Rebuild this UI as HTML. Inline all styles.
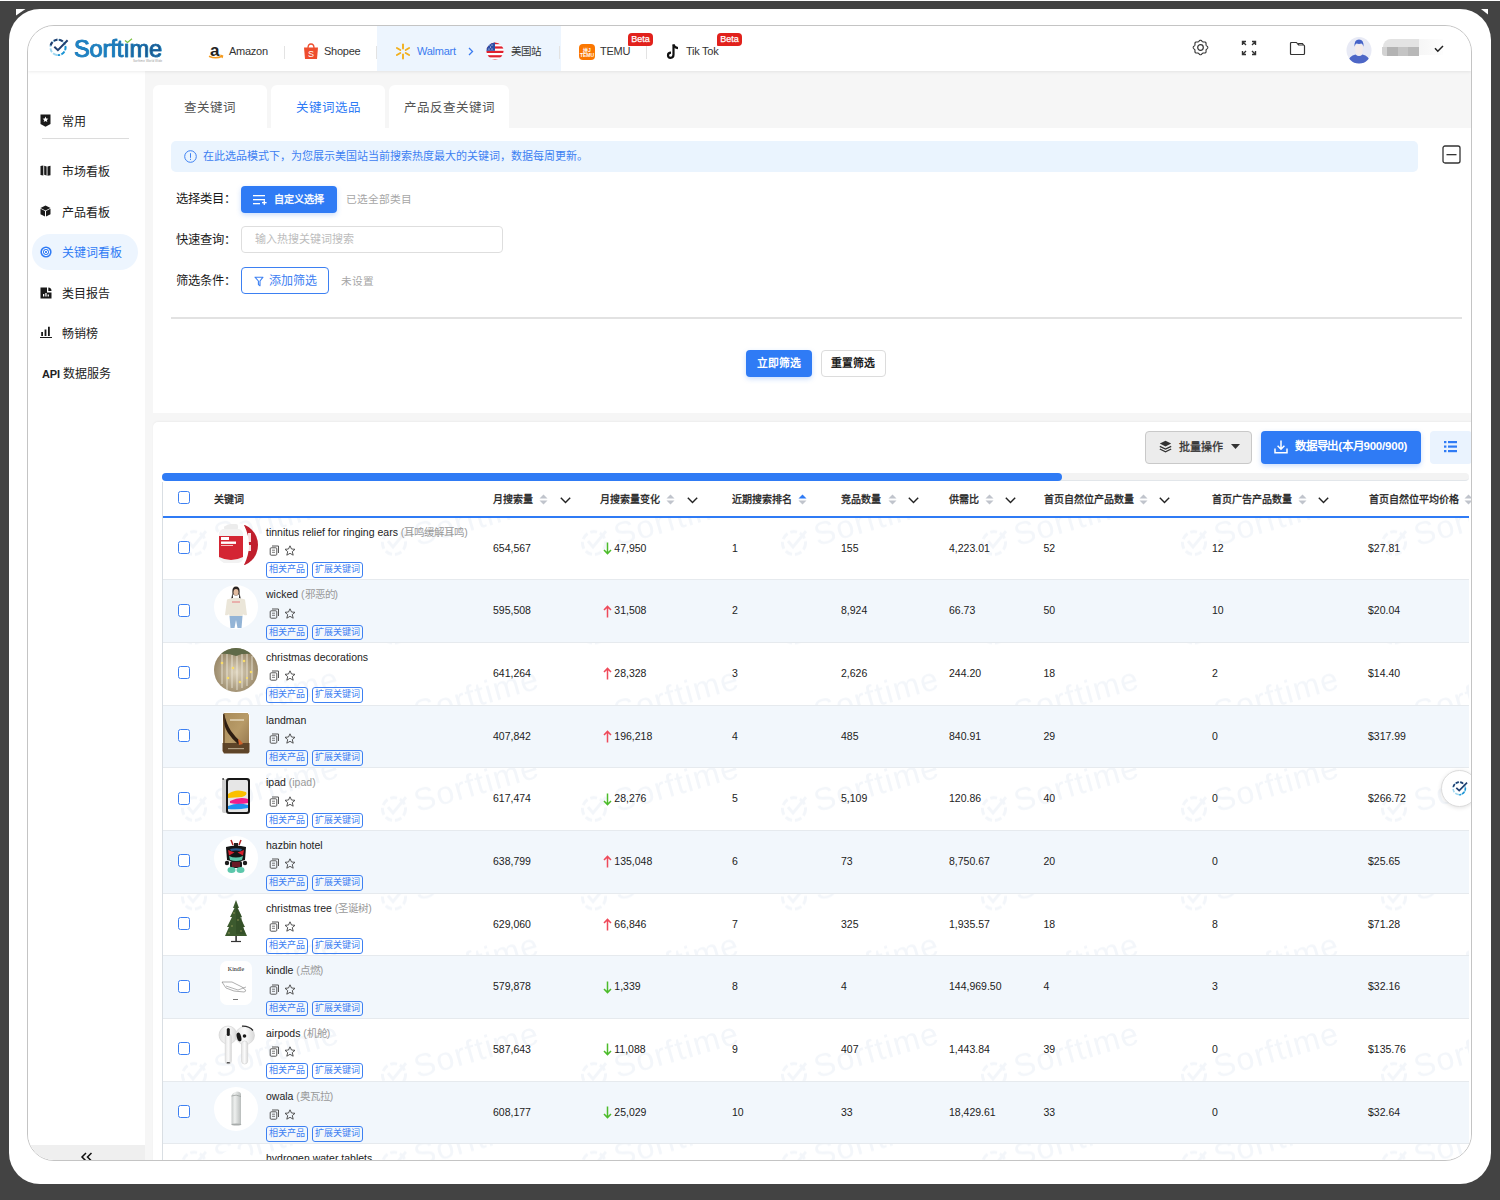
<!DOCTYPE html>
<html lang="zh-CN"><head><meta charset="utf-8">
<style>
*{box-sizing:border-box;margin:0;padding:0}
html,body{width:1500px;height:1200px;overflow:hidden;background:#434343;font-family:"Liberation Sans",sans-serif;color:#333}
.abs{position:absolute}
#outer{position:absolute;left:9px;top:9px;width:1482px;height:1175px;background:#fff;border-radius:31px}
#app{position:absolute;left:27px;top:25px;width:1445px;height:1136px;border:1px solid #c4c4c4;border-radius:27px;overflow:hidden;background:#f6f6f6}
#hdr{position:absolute;left:0;top:0;width:100%;height:45px;background:#fff;box-shadow:0 1px 3px rgba(0,0,0,.08);z-index:3}
#side{position:absolute;left:0;top:45px;width:117px;height:1091px;background:#fff}
.nav{position:absolute;left:34px;font-size:12px;font-weight:500;color:#222;height:20px;line-height:20px;white-space:nowrap}
.logo{background:linear-gradient(90deg,#1d88c9 0%,#1b7fbe 45%,#1a5f94 70%,#1c4b7a 100%);-webkit-background-clip:text;background-clip:text;color:transparent}
.ht{top:18px;font-size:11px;line-height:14px;color:#333;white-space:nowrap;letter-spacing:-0.25px}
.sep{top:20px;width:1px;height:13px;background:#e3e3e3}
.beta{top:7px;width:25px;height:13px;background:#e1211c;color:#fff;font-size:9px;line-height:13px;text-align:center;border-radius:4px 4px 4px 1px;-webkit-text-stroke:0.25px #fff}
.tab{position:absolute;top:59px;height:43px;background:#fff;border-radius:6px 6px 0 0;font-size:12.5px;line-height:46px;text-align:center}
.lbl{position:absolute;left:23px;font-size:12.3px;line-height:14px;color:#1a1a1a;font-weight:500;margin-top:-6px;white-space:nowrap}
.btnp{background:#2f7bf5;color:#fff;border-radius:4px;box-shadow:0 2px 5px rgba(47,123,245,.25)}
.grey{font-size:10.7px;line-height:14px;color:#a6a6a6;white-space:nowrap}
.cb{width:12px;height:13px;border:1.5px solid #3d80f2;border-radius:2.5px;background:#fff}
.th{position:absolute;font-size:10px;line-height:13px;font-weight:500;-webkit-text-stroke:0.3px #222;color:#222;white-space:nowrap}
.tt{position:absolute;font-size:10.5px;line-height:13px;color:#222;white-space:nowrap}
.tag{position:absolute;height:15.5px;border:1px solid #3d80f2;border-radius:3px;font-size:9px;line-height:13.5px;text-align:center;color:#3d80f2;white-space:nowrap}
.td{position:absolute;font-size:10.5px;line-height:13px;color:#222;white-space:nowrap}
</style></head>
<body>
<div class="abs" style="left:0;top:0;width:1500px;height:1px;background:#fff"></div>
<svg class="abs" style="left:0;top:0" width="1500" height="20" viewBox="0 0 1500 20"><path d="M16 9 H25.5 L16 15.5 Z" fill="#fff"/><path d="M1481 9 H1488 V14.5 Z" fill="#fff"/></svg>
<div id="outer"></div>
<div id="app">
  <div id="hdr">
    <svg class="abs" style="left:21px;top:11px" width="21" height="21" viewBox="0 0 21 21">
      <circle cx="9" cy="10.5" r="7.6" fill="none" stroke="#9fd6ef" stroke-width="1.9" stroke-dasharray="4 1.6" transform="rotate(100 9 10.5)"/>
      <path d="M16.4 9 A7.6 7.6 0 0 1 9 18.1" fill="none" stroke="#1a93d4" stroke-width="1.9" stroke-dasharray="4 1.6"/>
      <path d="M1.6 8.5 A7.6 7.6 0 0 1 14.5 5" fill="none" stroke="#1f3f70" stroke-width="2.1" stroke-dasharray="4 1.6"/>
      <path d="M5.3 9.7 L8.9 13.2 L18.6 3.3" fill="none" stroke="#1f3f70" stroke-width="2"/>
    </svg>
    <div class="abs logo" style="left:46px;top:10px;font-size:23.5px;-webkit-text-stroke:0.7px #1b78b8;letter-spacing:-0.1px">Sorftıme</div>
    <svg class="abs" style="left:96px;top:12px" width="9" height="6" viewBox="0 0 9 6"><path d="M1 2.5 L3.5 4.5 L8 0.8" fill="none" stroke="#7cc242" stroke-width="1.3"/></svg>
    <div class="abs" style="left:122px;top:29px;width:6px;height:2px"></div>
    <div class="abs" style="left:105px;top:33px;font-size:3px;color:#999;letter-spacing:0.1px">Sorftime World Wide</div>

    <!-- amazon -->
    <svg class="abs" style="left:180px;top:17px" width="16" height="17" viewBox="0 0 16 17">
      <text x="2" y="12.5" font-family="Liberation Sans" font-weight="bold" font-size="17" fill="#222">a</text>
      <path d="M1 13.2 Q8 16.5 14.2 13" fill="none" stroke="#f59a1e" stroke-width="1.6"/>
      <path d="M12.3 12 L14.6 12.8 L14 15" fill="none" stroke="#f59a1e" stroke-width="1.3"/>
    </svg>
    <div class="abs ht" style="left:201px">Amazon</div>
    <div class="abs sep" style="left:256px"></div>
    <!-- shopee -->
    <svg class="abs" style="left:275px;top:17px" width="16" height="17" viewBox="0 0 16 17">
      <path d="M5 5 Q5 1 8 1 Q11 1 11 5" fill="none" stroke="#ee4d2d" stroke-width="1.3"/>
      <path d="M1 4.5 L15 4.5 L14 16 L2 16 Z" fill="#ee4d2d"/>
      <text x="5" y="14" font-family="Liberation Sans" font-size="9" fill="#fff">S</text>
    </svg>
    <div class="abs ht" style="left:296px">Shopee</div>
    <div class="abs sep" style="left:348px"></div>
    <!-- walmart active -->
    <div class="abs" style="left:349px;top:0;width:184px;height:45px;background:#edf5fe"></div>
    <svg class="abs" style="left:367px;top:17px" width="16" height="17" viewBox="0 0 16 17">
      <g stroke="#f2b01e" stroke-width="1.9" stroke-linecap="round">
        <line x1="8" y1="1.5" x2="8" y2="5.5"/><line x1="8" y1="11.5" x2="8" y2="15.5"/>
        <line x1="1.9" y1="5" x2="5.3" y2="7"/><line x1="10.7" y1="10" x2="14.1" y2="12"/>
        <line x1="1.9" y1="12" x2="5.3" y2="10"/><line x1="10.7" y1="7" x2="14.1" y2="5"/>
      </g>
    </svg>
    <div class="abs ht" style="left:389px;color:#3b7cf0">Walmart</div>
    <svg class="abs" style="left:439px;top:19px" width="8" height="12" viewBox="0 0 8 12"><path d="M2 3 L5.5 6.5 L2 10" fill="none" stroke="#3b7cf0" stroke-width="1.3"/></svg>
    <svg class="abs" style="left:458px;top:16px" width="18" height="18" viewBox="0 0 18 18">
      <defs><clipPath id="fc"><circle cx="9" cy="9" r="8.6"/></clipPath></defs>
      <g clip-path="url(#fc)">
        <rect width="18" height="18" fill="#fff"/>
        <rect y="0" width="18" height="2.2" fill="#e0202e"/>
        <rect y="4.4" width="18" height="2.2" fill="#e0202e"/>
        <rect y="8.8" width="18" height="2.2" fill="#e0202e"/>
        <rect y="13.2" width="18" height="2.2" fill="#e0202e"/>
        <rect y="17" width="18" height="2" fill="#e0202e"/>
        <rect x="0" y="0" width="9" height="8.8" fill="#2c4ea8"/>
        <g fill="#fff"><circle cx="3" cy="3" r=".6"/><circle cx="6" cy="3" r=".6"/><circle cx="4.5" cy="5" r=".6"/><circle cx="3" cy="7" r=".6"/><circle cx="6" cy="7" r=".6"/></g>
      </g>
    </svg>
    <div class="abs ht" style="left:483px;font-size:10.5px">美国站</div>
    <div class="abs sep" style="left:531px"></div>
    <!-- temu -->
    <div class="abs" style="left:551px;top:18px;width:16px;height:16px;background:#fb7701;border-radius:4px;color:#fff;font-size:5px;line-height:5px;text-align:center;padding-top:4px;font-weight:bold">拼J<br>TEMU</div>
    <div class="abs ht" style="left:572px">TEMU</div>
    <div class="abs beta" style="left:600px">Beta</div>
    <div class="abs sep" style="left:618px"></div>
    <!-- tiktok -->
    <svg class="abs" style="left:638px;top:17px" width="14" height="17" viewBox="0 0 14 17">
      <path d="M7.5 1.5 L7.5 11.5 Q7.5 14.8 4.6 14.8 Q2 14.8 2 12.2 Q2 9.6 5 9.6" fill="none" stroke="#111" stroke-width="2.2"/>
      <path d="M7.5 1.5 Q8.5 5 12 5.2" fill="none" stroke="#111" stroke-width="2.2"/>
    </svg>
    <div class="abs ht" style="left:658px">Tik Tok</div>
    <div class="abs beta" style="left:689px">Beta</div>

    <!-- right icons -->
    <svg class="abs" style="left:1164px;top:12.5px" width="17" height="17" viewBox="0 0 17 17">
      <path d="M15.80 8.50 L15.74 8.88 L15.56 9.24 L15.30 9.58 L14.99 9.88 L14.68 10.16 L14.41 10.42 L14.21 10.69 L14.08 10.99 L14.04 11.32 L14.04 11.70 L14.07 12.11 L14.07 12.55 L14.02 12.97 L13.89 13.35 L13.66 13.66 L13.35 13.89 L12.97 14.02 L12.55 14.07 L12.11 14.07 L11.70 14.04 L11.32 14.04 L10.99 14.08 L10.69 14.21 L10.42 14.41 L10.16 14.68 L9.88 14.99 L9.58 15.30 L9.24 15.56 L8.88 15.74 L8.50 15.80 L8.12 15.74 L7.76 15.56 L7.42 15.30 L7.12 14.99 L6.84 14.68 L6.58 14.41 L6.31 14.21 L6.01 14.08 L5.68 14.04 L5.30 14.04 L4.89 14.07 L4.45 14.07 L4.03 14.02 L3.65 13.89 L3.34 13.66 L3.11 13.35 L2.98 12.97 L2.93 12.55 L2.93 12.11 L2.96 11.70 L2.96 11.32 L2.92 10.99 L2.79 10.69 L2.59 10.42 L2.32 10.16 L2.01 9.88 L1.70 9.58 L1.44 9.24 L1.26 8.88 L1.20 8.50 L1.26 8.12 L1.44 7.76 L1.70 7.42 L2.01 7.12 L2.32 6.84 L2.59 6.58 L2.79 6.31 L2.92 6.01 L2.96 5.68 L2.96 5.30 L2.93 4.89 L2.93 4.45 L2.98 4.03 L3.11 3.65 L3.34 3.34 L3.65 3.11 L4.03 2.98 L4.45 2.93 L4.89 2.93 L5.30 2.96 L5.68 2.96 L6.01 2.92 L6.31 2.79 L6.58 2.59 L6.84 2.32 L7.12 2.01 L7.42 1.70 L7.76 1.44 L8.12 1.26 L8.50 1.20 L8.88 1.26 L9.24 1.44 L9.58 1.70 L9.88 2.01 L10.16 2.32 L10.42 2.59 L10.69 2.79 L10.99 2.92 L11.32 2.96 L11.70 2.96 L12.11 2.93 L12.55 2.93 L12.97 2.98 L13.35 3.11 L13.66 3.34 L13.89 3.65 L14.02 4.03 L14.07 4.45 L14.07 4.89 L14.04 5.30 L14.04 5.68 L14.08 6.01 L14.21 6.31 L14.41 6.58 L14.68 6.84 L14.99 7.12 L15.30 7.42 L15.56 7.76 L15.74 8.12 Z" fill="none" stroke="#333" stroke-width="1.1" stroke-linejoin="round"/>
      <circle cx="8.5" cy="8.5" r="2.8" fill="none" stroke="#333" stroke-width="1.2"/>
    </svg>
    <svg class="abs" style="left:1212.5px;top:13.5px" width="16" height="16" viewBox="0 0 16 16">
      <g fill="none" stroke="#333" stroke-width="1.4">
        <path d="M1.5 5 V1.5 H5 M1.5 1.5 L5 5"/><path d="M14.5 5 V1.5 H11 M14.5 1.5 L11 5"/>
        <path d="M1.5 11 V14.5 H5 M1.5 14.5 L5 11"/><path d="M14.5 11 V14.5 H11 M14.5 14.5 L11 11"/>
      </g>
    </svg>
    <svg class="abs" style="left:1260.5px;top:14.5px" width="17" height="15" viewBox="0 0 17 15">
      <path d="M2.5 1.5 H7.5 L9.5 4 H14.5 Q15.5 4 15.5 5 V12.5 Q15.5 13.5 14.5 13.5 H2.5 Q1.5 13.5 1.5 12.5 V2.5 Q1.5 1.5 2.5 1.5 Z M9.5 4 V2.5 H13.5 L14.5 4" fill="none" stroke="#333" stroke-width="1.2" stroke-linejoin="round"/>
    </svg>
    <svg class="abs" style="left:1318px;top:10.5px" width="26" height="27" viewBox="0 0 26 27">
      <defs><clipPath id="av"><ellipse cx="13" cy="13.3" rx="12.5" ry="13.2"/></clipPath></defs>
      <ellipse cx="13" cy="13.3" rx="12.5" ry="13.2" fill="#e8eaf5"/>
      <g clip-path="url(#av)">
        <path d="M1.5 26 Q3 18.5 9.5 17.5 Q13 20.5 16.5 17.5 Q23 18.5 24.5 26 L24.5 28 L1.5 28 Z" fill="#4d66c6"/>
        <path d="M9.2 8 Q9 14.5 10 16.5 Q11.5 18.6 13 18.6 Q14.5 18.6 16 16.5 Q17 14.5 16.8 8 Z" fill="#f5ecea"/>
        <path d="M8.6 9.8 Q8 2.6 13 2.6 Q18 2.6 17.4 9.8 Q16.8 7 15.5 6.6 Q13 7.4 10.5 6.6 Q9.2 7 8.6 9.8 Z" fill="#4663c8"/>
      </g>
    </svg>
    <div class="abs" style="left:1355px;top:12.8px;width:36px;height:8.5px;background:#e3e3e3;border-radius:8px 0 0 0"></div>
    <div class="abs" style="left:1391px;top:12.8px;width:24px;height:16.5px;background:linear-gradient(90deg,#f6f6f6,#fdfdfd)"></div>
    <div class="abs" style="left:1354px;top:21px;width:37px;height:8.5px;background:linear-gradient(90deg,#d2d2d2 0,#d2d2d2 14%,#b3b3b3 14%,#b3b3b3 43%,#c4c4c4 43%,#c4c4c4 71%,#b8b8b8 71%);border-radius:0 0 0 3px"></div>
    <svg class="abs" style="left:1406px;top:19px" width="10" height="8" viewBox="0 0 10 8"><path d="M1 3.2 L3.8 6.2 L9 1" fill="none" stroke="#222" stroke-width="1.5"/></svg>
  </div>

  <!-- tabs -->
  <div class="tab" style="left:125px;width:114px;color:#555">查关键词</div>
  <div class="tab" style="left:243px;width:114px;color:#2f7bf5">关键词选品</div>
  <div class="tab" style="left:361px;width:120px;color:#555">产品反查关键词</div>
  <!-- filter panel -->
  <div id="fp" class="abs" style="left:125px;top:102px;width:1320px;height:285px;background:#fff">
    <div class="abs" style="left:18px;top:13px;width:1247px;height:31px;background:#eaf4fe;border-radius:5px"></div>
    <svg class="abs" style="left:31px;top:22px" width="13" height="13" viewBox="0 0 13 13"><circle cx="6.5" cy="6.5" r="5.8" fill="none" stroke="#3d80f2" stroke-width="1"/><rect x="6" y="3.2" width="1" height="4.6" fill="#3d80f2"/><rect x="6" y="8.8" width="1" height="1.1" fill="#3d80f2"/></svg>
    <div class="abs" style="left:50px;top:21px;font-size:11px;line-height:14px;color:#3d80f2;white-space:nowrap">在此选品模式下，为您展示美国站当前搜索热度最大的关键词，数据每周更新。</div>
    <svg class="abs" style="left:1289px;top:17px" width="19" height="19" viewBox="0 0 19 19"><rect x="1" y="1" width="17" height="17" rx="2" fill="none" stroke="#333" stroke-width="1.3"/><rect x="4.5" y="9" width="10" height="1.3" fill="#333"/></svg>

    <div class="lbl" style="top:70px">选择类目：</div>
    <div class="abs btnp" style="left:88px;top:58px;width:96px;height:27px">
      <svg class="abs" style="left:12px;top:8px" width="14" height="13" viewBox="0 0 14 13"><g fill="#fff"><rect x="0" y="1" width="12" height="1.3"/><rect x="0" y="5" width="12" height="1.3"/><rect x="0" y="9" width="7" height="1.3"/><rect x="9" y="8" width="4.6" height="1.3"/><rect x="10.65" y="6.3" width="1.3" height="4.6"/></g></svg>
      <span class="abs" style="left:33px;top:6.5px;font-size:10.1px;line-height:14px;font-weight:500;-webkit-text-stroke:0.35px #fff">自定义选择</span>
    </div>
    <div class="abs grey" style="left:193px;top:64px">已选全部类目</div>

    <div class="lbl" style="top:111px">快速查询：</div>
    <div class="abs" style="left:88px;top:98px;width:262px;height:27px;border:1px solid #dedede;border-radius:4px"></div>
    <div class="abs" style="left:102px;top:104px;font-size:11px;line-height:14px;color:#bcbcbc;white-space:nowrap">输入热搜关键词搜索</div>

    <div class="lbl" style="top:152px">筛选条件：</div>
    <div class="abs" style="left:88px;top:139px;width:88px;height:27px;border:1px solid #3d80f2;border-radius:4px">
      <svg class="abs" style="left:12px;top:8px" width="10" height="11" viewBox="0 0 10 11"><path d="M1 1.2 H9 L6 5 V9.8 L4.4 8.6 V5 Z" fill="none" stroke="#3d80f2" stroke-width="1.1" stroke-linejoin="round"/></svg>
      <span class="abs" style="left:27px;top:5px;font-size:12px;line-height:16px;color:#3d80f2;white-space:nowrap">添加筛选</span>
    </div>
    <div class="abs grey" style="left:188px;top:146px">未设置</div>

    <div class="abs" style="left:18px;top:189px;width:1291px;height:2px;background:#e2e2e2"></div>
    <div class="abs btnp" style="left:593px;top:222px;width:66px;height:27px;font-size:10.8px;line-height:27px;text-align:center;font-weight:bold">立即筛选</div>
    <div class="abs" style="left:668px;top:222px;width:65px;height:27px;border:1px solid #dcdcdc;border-radius:4px;font-size:10.8px;line-height:25px;text-align:center;font-weight:bold;color:#222;padding-right:1px">重置筛选</div>
  </div>
  <!-- table panel -->
  <div id="tp" class="abs" style="left:125px;top:396px;width:1320px;height:745px;background:#fff;overflow:hidden;border-radius:5px 0 0 0;box-shadow:0 -1px 2px rgba(0,0,0,.04)">
<div class="abs" style="left:992px;top:9px;width:107px;height:33px;background:#ececec;border:1px solid #c9c9c9;border-radius:4px"></div>
<svg class="abs" style="left:1006px;top:18px" width="13" height="13" viewBox="0 0 13 13"><path d="M6.5 0.8 L12.2 3.6 L6.5 6.4 L0.8 3.6 Z" fill="#333"/><path d="M0.8 6.3 L6.5 9.1 L12.2 6.3" fill="none" stroke="#333" stroke-width="1.3"/><path d="M0.8 9 L6.5 11.8 L12.2 9" fill="none" stroke="#333" stroke-width="1.3"/></svg>
<div class="abs" style="left:1026px;top:18px;font-size:11px;line-height:15px;font-weight:500;-webkit-text-stroke:0.3px #333;color:#333">批量操作</div>
<svg class="abs" style="left:1078px;top:22px" width="9" height="5" viewBox="0 0 9 5"><path d="M0 0 H9 L4.5 5 Z" fill="#333"/></svg>
<div class="abs btnp" style="left:1108px;top:9px;width:160px;height:33px"></div>
<svg class="abs" style="left:1121px;top:18px" width="14" height="14" viewBox="0 0 14 14"><path d="M7 0.5 V9 M3.6 5.8 L7 9.2 L10.4 5.8" fill="none" stroke="#fff" stroke-width="1.5"/><path d="M1 8.5 V12.8 H13 V8.5" fill="none" stroke="#fff" stroke-width="1.5"/></svg>
<div class="abs" style="left:1142px;top:17px;font-size:11.5px;line-height:15px;font-weight:bold;color:#fff;white-space:nowrap;letter-spacing:-0.2px">数据导出(本月900/900)</div>
<div class="abs" style="left:1277px;top:9px;width:42px;height:33px;background:#eaf3fe;border-radius:4px"></div>
<svg class="abs" style="left:1291px;top:18px" width="13" height="13" viewBox="0 0 13 13"><g fill="#2f7bf5"><rect x="0" y="1" width="2.4" height="2.2"/><rect x="4" y="1" width="9" height="2.2"/><rect x="0" y="5.5" width="2.4" height="2.2"/><rect x="4" y="5.5" width="9" height="2.2"/><rect x="0" y="10" width="2.4" height="2.2"/><rect x="4" y="10" width="9" height="2.2"/></g></svg>

<div class="abs" style="left:9px;top:51.3px;width:1307px;height:7.5px;background:#f3f3f3;border-radius:4px;border-bottom:1px solid #e2e6ea"></div>
<div class="abs" style="left:9px;top:51.3px;width:900px;height:7.5px;background:#2f7bf5;border-radius:4px"></div>
<div class="abs" style="left:9px;top:60px;width:1px;height:800px;background:#d9dee3"></div>
<div class="abs" style="left:10px;top:94px;width:1306px;height:2px;background:#2f7bf5"></div>
<div class="abs cb" style="left:25px;top:69.3px"></div>
<div class="th" style="left:61px;top:71px">关键词</div>
<div class="th" style="left:340px;top:71px">月搜索量</div>
<svg class="abs" style="left:386px;top:72px" width="9" height="11" viewBox="0 0 9 11"><path d="M4.5 0.5 L8.5 4.5 H0.5 Z" fill="#c0c4cc"/><path d="M4.5 10.5 L8.5 6.5 H0.5 Z" fill="#c0c4cc"/></svg>
<svg class="abs" style="left:407px;top:75px" width="11" height="7" viewBox="0 0 11 7"><path d="M0.8 0.8 L5.5 5.6 L10.2 0.8" fill="none" stroke="#222" stroke-width="1.4"/></svg>
<div class="th" style="left:447px;top:71px">月搜索量变化</div>
<svg class="abs" style="left:513px;top:72px" width="9" height="11" viewBox="0 0 9 11"><path d="M4.5 0.5 L8.5 4.5 H0.5 Z" fill="#c0c4cc"/><path d="M4.5 10.5 L8.5 6.5 H0.5 Z" fill="#c0c4cc"/></svg>
<svg class="abs" style="left:534px;top:75px" width="11" height="7" viewBox="0 0 11 7"><path d="M0.8 0.8 L5.5 5.6 L10.2 0.8" fill="none" stroke="#222" stroke-width="1.4"/></svg>
<div class="th" style="left:579px;top:71px">近期搜索排名</div>
<svg class="abs" style="left:645px;top:72px" width="9" height="11" viewBox="0 0 9 11"><path d="M4.5 0.5 L8.5 4.5 H0.5 Z" fill="#2f7bf5"/><path d="M4.5 10.5 L8.5 6.5 H0.5 Z" fill="#c0c4cc"/></svg>
<div class="th" style="left:688px;top:71px">竞品数量</div>
<svg class="abs" style="left:735px;top:72px" width="9" height="11" viewBox="0 0 9 11"><path d="M4.5 0.5 L8.5 4.5 H0.5 Z" fill="#c0c4cc"/><path d="M4.5 10.5 L8.5 6.5 H0.5 Z" fill="#c0c4cc"/></svg>
<svg class="abs" style="left:755px;top:75px" width="11" height="7" viewBox="0 0 11 7"><path d="M0.8 0.8 L5.5 5.6 L10.2 0.8" fill="none" stroke="#222" stroke-width="1.4"/></svg>
<div class="th" style="left:796px;top:71px">供需比</div>
<svg class="abs" style="left:832px;top:72px" width="9" height="11" viewBox="0 0 9 11"><path d="M4.5 0.5 L8.5 4.5 H0.5 Z" fill="#c0c4cc"/><path d="M4.5 10.5 L8.5 6.5 H0.5 Z" fill="#c0c4cc"/></svg>
<svg class="abs" style="left:852px;top:75px" width="11" height="7" viewBox="0 0 11 7"><path d="M0.8 0.8 L5.5 5.6 L10.2 0.8" fill="none" stroke="#222" stroke-width="1.4"/></svg>
<div class="th" style="left:890.5px;top:71px">首页自然位产品数量</div>
<svg class="abs" style="left:986px;top:72px" width="9" height="11" viewBox="0 0 9 11"><path d="M4.5 0.5 L8.5 4.5 H0.5 Z" fill="#c0c4cc"/><path d="M4.5 10.5 L8.5 6.5 H0.5 Z" fill="#c0c4cc"/></svg>
<svg class="abs" style="left:1006px;top:75px" width="11" height="7" viewBox="0 0 11 7"><path d="M0.8 0.8 L5.5 5.6 L10.2 0.8" fill="none" stroke="#222" stroke-width="1.4"/></svg>
<div class="th" style="left:1059px;top:71px">首页广告产品数量</div>
<svg class="abs" style="left:1145px;top:72px" width="9" height="11" viewBox="0 0 9 11"><path d="M4.5 0.5 L8.5 4.5 H0.5 Z" fill="#c0c4cc"/><path d="M4.5 10.5 L8.5 6.5 H0.5 Z" fill="#c0c4cc"/></svg>
<svg class="abs" style="left:1165px;top:75px" width="11" height="7" viewBox="0 0 11 7"><path d="M0.8 0.8 L5.5 5.6 L10.2 0.8" fill="none" stroke="#222" stroke-width="1.4"/></svg>
<div class="th" style="left:1215.7px;top:71px">首页自然位平均价格</div>
<svg class="abs" style="left:1311px;top:72px" width="9" height="11" viewBox="0 0 9 11"><path d="M4.5 0.5 L8.5 4.5 H0.5 Z" fill="#c0c4cc"/><path d="M4.5 10.5 L8.5 6.5 H0.5 Z" fill="#c0c4cc"/></svg>
<svg class="abs" style="left:10px;top:96px" width="1306" height="650" viewBox="10 96 1306 650"><defs><pattern id="wm" patternUnits="userSpaceOnUse" x="223" y="59" width="200" height="88.67"><g fill="none" stroke="#f3f6fa" stroke-width="3"><circle cx="18" cy="62" r="11.5" stroke-dasharray="7 3"/><path d="M12 60 L17 66 L30 50"/></g><text x="41.5" y="65" transform="rotate(-16 41.5 65)" font-family="Liberation Sans" font-size="32" letter-spacing="1.2" fill="#f3f6fa">Sorftime</text></pattern></defs><rect x="10" y="96" width="1306" height="650" fill="url(#wm)"/></svg>
<div class="abs" style="left:10px;top:95.6px;width:1306px;height:62.67px;background:transparent;border-bottom:1px solid #e6eaee"></div>
<div class="abs cb" style="left:25px;top:119.1px"></div>
<div class="abs" style="left:60.5px;top:100.6px;width:44px;height:44px"><svg width="44" height="44" viewBox="0 0 44 44"><defs><clipPath id="c1"><circle cx="22" cy="22" r="22"/></clipPath></defs><g clip-path="url(#c1)"><rect width="44" height="44" fill="#fff"/><path d="M30 2 Q40 22 30 42 L44 44 L44 0 Z" fill="#c01f2d"/><g fill="#fff" opacity=".85"><rect x="34" y="10" width="3" height="9"/><rect x="34" y="22" width="3" height="6"/></g><rect x="10" y="1" width="14" height="6" rx="2" fill="#ececec"/><rect x="5" y="6" width="24" height="34" rx="5" fill="#f2f2f2"/><path d="M5 13 H29 V34 Q17 40 5 34 Z" fill="#d42533"/><rect x="7" y="14" width="8" height="3" fill="#fff"/><rect x="7" y="18.5" width="15" height="2.4" fill="#fff"/><rect x="7" y="22" width="12" height="1" fill="#f5c0c0"/></g></svg></div>
<div class="tt" style="left:113px;top:103.6px">tinnitus relief for ringing ears <span style="color:#999">(耳鸣缓解耳鸣)</span></div>
<svg class="abs" style="left:115.5px;top:123.1px" width="11" height="11" viewBox="0 0 11 11"><path d="M3 1 H9.5 V8" fill="none" stroke="#555" stroke-width="1"/><rect x="1.2" y="2.8" width="6.6" height="7.4" rx="1" fill="none" stroke="#555" stroke-width="1"/><path d="M3 5.2 H6 M3 7.3 H6" stroke="#555" stroke-width=".8"/></svg>
<svg class="abs" style="left:131px;top:123.1px" width="12" height="11" viewBox="0 0 12 11"><path d="M6 0.8 L7.5 4 L11 4.3 L8.3 6.6 L9.2 10.2 L6 8.3 L2.8 10.2 L3.7 6.6 L1 4.3 L4.5 4 Z" fill="none" stroke="#444" stroke-width="0.9" stroke-linejoin="round"/></svg>
<div class="tag" style="left:113px;top:140.1px;width:42px">相关产品</div>
<div class="tag" style="left:159px;top:140.1px;width:51px">扩展关键词</div>
<div class="td" style="left:340px;top:119.6px">654,567</div>
<svg class="abs" style="left:449.5px;top:119.9px" width="9" height="13" viewBox="0 0 9 13"><path d="M4.5 0.5 V11.5 M1 8 L4.5 11.6 L8 8" fill="none" stroke="#4cbb2a" stroke-width="1.5"/></svg>
<div class="td" style="left:461.3px;top:119.6px">47,950</div>
<div class="td" style="left:579px;top:119.6px">1</div>
<div class="td" style="left:688px;top:119.6px">155</div>
<div class="td" style="left:796px;top:119.6px">4,223.01</div>
<div class="td" style="left:890.5px;top:119.6px">52</div>
<div class="td" style="left:1059px;top:119.6px">12</div>
<div class="td" style="left:1215px;top:119.6px">$27.81</div>
<div class="abs" style="left:10px;top:158.27px;width:1306px;height:62.67px;background:#f2f7fc;border-bottom:1px solid #e6eaee"></div>
<div class="abs cb" style="left:25px;top:181.77px"></div>
<div class="abs" style="left:60.5px;top:163.27px;width:44px;height:44px"><svg width="44" height="44" viewBox="0 0 44 44"><circle cx="22" cy="22" r="22" fill="#fff"/><ellipse cx="22" cy="6" rx="3.6" ry="4.5" fill="#2b2421"/><path d="M18.4 6 Q18 12 17 14 L19 13 Z M25.6 6 Q26 12 27 14 L25 13 Z" fill="#2b2421"/><ellipse cx="22" cy="7.3" rx="2.5" ry="3.2" fill="#e2bca0"/><path d="M13 14.5 Q22 11 31 14.5 L33 30 Q30 31 29 29 L28.5 31 H15.5 L15 29 Q14 31 11 30 Z" fill="#ebe6d9"/><path d="M18 17 H26" stroke="#e9a3a0" stroke-width="1.6"/><path d="M15.5 31 H28.5 L27.5 43 H23.5 L22 35 L20.5 43 H16.5 Z" fill="#93b4d6"/></svg></div>
<div class="tt" style="left:113px;top:166.27px">wicked <span style="color:#999">(邪恶的)</span></div>
<svg class="abs" style="left:115.5px;top:185.77px" width="11" height="11" viewBox="0 0 11 11"><path d="M3 1 H9.5 V8" fill="none" stroke="#555" stroke-width="1"/><rect x="1.2" y="2.8" width="6.6" height="7.4" rx="1" fill="none" stroke="#555" stroke-width="1"/><path d="M3 5.2 H6 M3 7.3 H6" stroke="#555" stroke-width=".8"/></svg>
<svg class="abs" style="left:131px;top:185.77px" width="12" height="11" viewBox="0 0 12 11"><path d="M6 0.8 L7.5 4 L11 4.3 L8.3 6.6 L9.2 10.2 L6 8.3 L2.8 10.2 L3.7 6.6 L1 4.3 L4.5 4 Z" fill="none" stroke="#444" stroke-width="0.9" stroke-linejoin="round"/></svg>
<div class="tag" style="left:113px;top:202.77px;width:42px">相关产品</div>
<div class="tag" style="left:159px;top:202.77px;width:51px">扩展关键词</div>
<div class="td" style="left:340px;top:182.27px">595,508</div>
<svg class="abs" style="left:449.5px;top:182.57px" width="9" height="13" viewBox="0 0 9 13"><path d="M4.5 12.5 V1.5 M1 5 L4.5 1.4 L8 5" fill="none" stroke="#ef4a5a" stroke-width="1.5"/></svg>
<div class="td" style="left:461.3px;top:182.27px">31,508</div>
<div class="td" style="left:579px;top:182.27px">2</div>
<div class="td" style="left:688px;top:182.27px">8,924</div>
<div class="td" style="left:796px;top:182.27px">66.73</div>
<div class="td" style="left:890.5px;top:182.27px">50</div>
<div class="td" style="left:1059px;top:182.27px">10</div>
<div class="td" style="left:1215px;top:182.27px">$20.04</div>
<div class="abs" style="left:10px;top:220.94px;width:1306px;height:62.67px;background:transparent;border-bottom:1px solid #e6eaee"></div>
<div class="abs cb" style="left:25px;top:244.44px"></div>
<div class="abs" style="left:60.5px;top:225.94px;width:44px;height:44px"><svg width="44" height="44" viewBox="0 0 44 44"><defs><clipPath id="c3"><circle cx="22" cy="22" r="22"/></clipPath><radialGradient id="g3" cx="50%" cy="55%" r="60%"><stop offset="0" stop-color="#ddd3bd"/><stop offset="1" stop-color="#8f7d5c"/></radialGradient></defs><g clip-path="url(#c3)"><rect width="44" height="44" fill="url(#g3)"/><path d="M0 0 H44 V7 Q30 4 22 8 Q12 4 0 7 Z" fill="#5f6a48"/><g stroke="#f4efe2" stroke-width=".9" opacity=".85"><line x1="8" y1="6" x2="8" y2="36"/><line x1="13" y1="6" x2="13" y2="42"/><line x1="18" y1="7" x2="18" y2="40"/><line x1="23" y1="8" x2="23" y2="42"/><line x1="28" y1="6" x2="28" y2="40"/><line x1="33" y1="6" x2="33" y2="38"/><line x1="38" y1="8" x2="38" y2="32"/></g><g fill="#f8dc6a"><circle cx="8" cy="15" r="1.3"/><circle cx="19" cy="20" r="1.3"/><circle cx="30" cy="13" r="1.3"/><circle cx="37" cy="24" r="1.3"/><circle cx="14" cy="30" r="1.3"/><circle cx="26" cy="34" r="1.3"/><circle cx="33" cy="30" r="1.1"/></g></g></svg></div>
<div class="tt" style="left:113px;top:228.94px">christmas decorations</div>
<svg class="abs" style="left:115.5px;top:248.44px" width="11" height="11" viewBox="0 0 11 11"><path d="M3 1 H9.5 V8" fill="none" stroke="#555" stroke-width="1"/><rect x="1.2" y="2.8" width="6.6" height="7.4" rx="1" fill="none" stroke="#555" stroke-width="1"/><path d="M3 5.2 H6 M3 7.3 H6" stroke="#555" stroke-width=".8"/></svg>
<svg class="abs" style="left:131px;top:248.44px" width="12" height="11" viewBox="0 0 12 11"><path d="M6 0.8 L7.5 4 L11 4.3 L8.3 6.6 L9.2 10.2 L6 8.3 L2.8 10.2 L3.7 6.6 L1 4.3 L4.5 4 Z" fill="none" stroke="#444" stroke-width="0.9" stroke-linejoin="round"/></svg>
<div class="tag" style="left:113px;top:265.44px;width:42px">相关产品</div>
<div class="tag" style="left:159px;top:265.44px;width:51px">扩展关键词</div>
<div class="td" style="left:340px;top:244.94px">641,264</div>
<svg class="abs" style="left:449.5px;top:245.24px" width="9" height="13" viewBox="0 0 9 13"><path d="M4.5 12.5 V1.5 M1 5 L4.5 1.4 L8 5" fill="none" stroke="#ef4a5a" stroke-width="1.5"/></svg>
<div class="td" style="left:461.3px;top:244.94px">28,328</div>
<div class="td" style="left:579px;top:244.94px">3</div>
<div class="td" style="left:688px;top:244.94px">2,626</div>
<div class="td" style="left:796px;top:244.94px">244.20</div>
<div class="td" style="left:890.5px;top:244.94px">18</div>
<div class="td" style="left:1059px;top:244.94px">2</div>
<div class="td" style="left:1215px;top:244.94px">$14.40</div>
<div class="abs" style="left:10px;top:283.61px;width:1306px;height:62.67px;background:#f2f7fc;border-bottom:1px solid #e6eaee"></div>
<div class="abs cb" style="left:25px;top:307.11px"></div>
<div class="abs" style="left:60.5px;top:288.61px;width:44px;height:44px"><svg width="44" height="44" viewBox="0 0 44 44"><defs><linearGradient id="lm" x1="0" y1="0" x2="1" y2="1"><stop offset="0" stop-color="#a88a58"/><stop offset=".5" stop-color="#b89b68"/><stop offset="1" stop-color="#8e7048"/></linearGradient></defs><path d="M10 1.5 L34 1.5 L35.5 4 V41 L34 42.5 H10 L8.5 40 V4 Z" fill="url(#lm)" stroke="#fff" stroke-width="1"/><path d="M8.5 32 H35.5 V41 L34 42.5 H10 L8.5 40 Z" fill="#5e4428"/><path d="M10 2 Q12 12 17 20 Q22 27 27 31 L24 33 Q18 28 14 22 Q9 14 9 4 Z" fill="#2e1e12"/><path d="M24 28 Q27 29 29 33 L25 34 Z" fill="#d0602a"/><rect x="9" y="4" width="2" height="36" fill="#5a3e22" opacity=".6"/><rect x="16" y="8" width="14" height="2" fill="#e8dcc0" opacity=".7"/><rect x="14" y="37" width="16" height="1.2" fill="#e8dcc0" opacity=".6"/></svg></div>
<div class="tt" style="left:113px;top:291.61px">landman</div>
<svg class="abs" style="left:115.5px;top:311.11px" width="11" height="11" viewBox="0 0 11 11"><path d="M3 1 H9.5 V8" fill="none" stroke="#555" stroke-width="1"/><rect x="1.2" y="2.8" width="6.6" height="7.4" rx="1" fill="none" stroke="#555" stroke-width="1"/><path d="M3 5.2 H6 M3 7.3 H6" stroke="#555" stroke-width=".8"/></svg>
<svg class="abs" style="left:131px;top:311.11px" width="12" height="11" viewBox="0 0 12 11"><path d="M6 0.8 L7.5 4 L11 4.3 L8.3 6.6 L9.2 10.2 L6 8.3 L2.8 10.2 L3.7 6.6 L1 4.3 L4.5 4 Z" fill="none" stroke="#444" stroke-width="0.9" stroke-linejoin="round"/></svg>
<div class="tag" style="left:113px;top:328.11px;width:42px">相关产品</div>
<div class="tag" style="left:159px;top:328.11px;width:51px">扩展关键词</div>
<div class="td" style="left:340px;top:307.61px">407,842</div>
<svg class="abs" style="left:449.5px;top:307.91px" width="9" height="13" viewBox="0 0 9 13"><path d="M4.5 12.5 V1.5 M1 5 L4.5 1.4 L8 5" fill="none" stroke="#ef4a5a" stroke-width="1.5"/></svg>
<div class="td" style="left:461.3px;top:307.61px">196,218</div>
<div class="td" style="left:579px;top:307.61px">4</div>
<div class="td" style="left:688px;top:307.61px">485</div>
<div class="td" style="left:796px;top:307.61px">840.91</div>
<div class="td" style="left:890.5px;top:307.61px">29</div>
<div class="td" style="left:1059px;top:307.61px">0</div>
<div class="td" style="left:1215px;top:307.61px">$317.99</div>
<div class="abs" style="left:10px;top:346.28px;width:1306px;height:62.67px;background:transparent;border-bottom:1px solid #e6eaee"></div>
<div class="abs cb" style="left:25px;top:369.78px"></div>
<div class="abs" style="left:60.5px;top:351.28px;width:44px;height:44px"><svg width="44" height="44" viewBox="0 0 44 44"><rect x="8" y="6" width="5" height="34" rx="2" fill="#cfcfcf"/><rect x="8.5" y="5" width="1.2" height="2" fill="#222"/><rect x="12" y="5" width="24" height="36" rx="3" fill="#161616"/><rect x="14" y="7" width="20" height="32" rx="1.5" fill="#e6e6e6"/><path d="M14 21 Q22 15 32 19 Q34 22 28 24 L14 25 Z" fill="#fbc000"/><path d="M16 28 Q26 23 34 26 V30 Q24 32 16 30 Z" fill="#f01e8c"/><path d="M14 33 Q24 29 34 32 V35 Q24 37 14 36 Z" fill="#1e90f0"/></svg></div>
<div class="tt" style="left:113px;top:354.28px">ipad <span style="color:#999">(ipad)</span></div>
<svg class="abs" style="left:115.5px;top:373.78px" width="11" height="11" viewBox="0 0 11 11"><path d="M3 1 H9.5 V8" fill="none" stroke="#555" stroke-width="1"/><rect x="1.2" y="2.8" width="6.6" height="7.4" rx="1" fill="none" stroke="#555" stroke-width="1"/><path d="M3 5.2 H6 M3 7.3 H6" stroke="#555" stroke-width=".8"/></svg>
<svg class="abs" style="left:131px;top:373.78px" width="12" height="11" viewBox="0 0 12 11"><path d="M6 0.8 L7.5 4 L11 4.3 L8.3 6.6 L9.2 10.2 L6 8.3 L2.8 10.2 L3.7 6.6 L1 4.3 L4.5 4 Z" fill="none" stroke="#444" stroke-width="0.9" stroke-linejoin="round"/></svg>
<div class="tag" style="left:113px;top:390.78px;width:42px">相关产品</div>
<div class="tag" style="left:159px;top:390.78px;width:51px">扩展关键词</div>
<div class="td" style="left:340px;top:370.28px">617,474</div>
<svg class="abs" style="left:449.5px;top:370.58px" width="9" height="13" viewBox="0 0 9 13"><path d="M4.5 0.5 V11.5 M1 8 L4.5 11.6 L8 8" fill="none" stroke="#4cbb2a" stroke-width="1.5"/></svg>
<div class="td" style="left:461.3px;top:370.28px">28,276</div>
<div class="td" style="left:579px;top:370.28px">5</div>
<div class="td" style="left:688px;top:370.28px">5,109</div>
<div class="td" style="left:796px;top:370.28px">120.86</div>
<div class="td" style="left:890.5px;top:370.28px">40</div>
<div class="td" style="left:1059px;top:370.28px">0</div>
<div class="td" style="left:1215px;top:370.28px">$266.72</div>
<div class="abs" style="left:10px;top:408.95px;width:1306px;height:62.67px;background:#f2f7fc;border-bottom:1px solid #e6eaee"></div>
<div class="abs cb" style="left:25px;top:432.45px"></div>
<div class="abs" style="left:60.5px;top:413.95px;width:44px;height:44px"><svg width="44" height="44" viewBox="0 0 44 44"><circle cx="22" cy="22" r="22" fill="#fff"/><path d="M17 4 L19 9 M27 4 L25 9" stroke="#b02020" stroke-width="1.5"/><rect x="20" y="7" width="4" height="3" fill="#222"/><path d="M12 11 Q22 8 32 11 L31 24 Q22 27 13 24 Z" fill="#141414"/><path d="M14 14 L20.5 16.5 L15 19.5 Z M30 14 L23.5 16.5 L29 19.5 Z" fill="#d61f2c"/><path d="M16 13 Q22 11.5 28 13 L27 15 Q22 14 17 15 Z" fill="#2a5a8a"/><path d="M15 20 Q22 23 29 20 L28 24 Q22 26 16 24 Z" fill="#5cc7ab"/><rect x="16" y="25" width="12" height="7" rx="2" fill="#1c1c1c"/><rect x="18" y="26" width="8" height="5" fill="#6a1a26"/><circle cx="13" cy="27" r="2.2" fill="#1c1c1c"/><circle cx="31" cy="27" r="2.2" fill="#1c1c1c"/><ellipse cx="17.5" cy="34" rx="4" ry="3" fill="#5cc7ab"/><ellipse cx="26.5" cy="34" rx="4" ry="3" fill="#5cc7ab"/></svg></div>
<div class="tt" style="left:113px;top:416.95px">hazbin hotel</div>
<svg class="abs" style="left:115.5px;top:436.45px" width="11" height="11" viewBox="0 0 11 11"><path d="M3 1 H9.5 V8" fill="none" stroke="#555" stroke-width="1"/><rect x="1.2" y="2.8" width="6.6" height="7.4" rx="1" fill="none" stroke="#555" stroke-width="1"/><path d="M3 5.2 H6 M3 7.3 H6" stroke="#555" stroke-width=".8"/></svg>
<svg class="abs" style="left:131px;top:436.45px" width="12" height="11" viewBox="0 0 12 11"><path d="M6 0.8 L7.5 4 L11 4.3 L8.3 6.6 L9.2 10.2 L6 8.3 L2.8 10.2 L3.7 6.6 L1 4.3 L4.5 4 Z" fill="none" stroke="#444" stroke-width="0.9" stroke-linejoin="round"/></svg>
<div class="tag" style="left:113px;top:453.45px;width:42px">相关产品</div>
<div class="tag" style="left:159px;top:453.45px;width:51px">扩展关键词</div>
<div class="td" style="left:340px;top:432.95px">638,799</div>
<svg class="abs" style="left:449.5px;top:433.25px" width="9" height="13" viewBox="0 0 9 13"><path d="M4.5 12.5 V1.5 M1 5 L4.5 1.4 L8 5" fill="none" stroke="#ef4a5a" stroke-width="1.5"/></svg>
<div class="td" style="left:461.3px;top:432.95px">135,048</div>
<div class="td" style="left:579px;top:432.95px">6</div>
<div class="td" style="left:688px;top:432.95px">73</div>
<div class="td" style="left:796px;top:432.95px">8,750.67</div>
<div class="td" style="left:890.5px;top:432.95px">20</div>
<div class="td" style="left:1059px;top:432.95px">0</div>
<div class="td" style="left:1215px;top:432.95px">$25.65</div>
<div class="abs" style="left:10px;top:471.62px;width:1306px;height:62.67px;background:transparent;border-bottom:1px solid #e6eaee"></div>
<div class="abs cb" style="left:25px;top:495.12px"></div>
<div class="abs" style="left:60.5px;top:476.62px;width:44px;height:44px"><svg width="44" height="44" viewBox="0 0 44 44"><path d="M22 1 L25 9 L23.5 9 L28 18 L26 18 L31 28 L29 28 L33 37 L11 37 L15 28 L13 28 L18 18 L16 18 L20.5 9 L19 9 Z" fill="#3c5a2e"/><path d="M22 5 L27 16 L29 26 L31 35 L22 35 Z" fill="#2f4a24" opacity=".6"/><g fill="#d8c878" opacity=".7"><circle cx="20" cy="14" r=".7"/><circle cx="24" cy="21" r=".7"/><circle cx="18" cy="27" r=".7"/><circle cx="27" cy="32" r=".7"/><circle cx="15" cy="34" r=".7"/></g><rect x="21.3" y="37" width="1.6" height="5" fill="#333"/><path d="M17 42.5 L27 42.5" stroke="#333" stroke-width="1.2"/></svg></div>
<div class="tt" style="left:113px;top:479.62px">christmas tree <span style="color:#999">(圣诞树)</span></div>
<svg class="abs" style="left:115.5px;top:499.12px" width="11" height="11" viewBox="0 0 11 11"><path d="M3 1 H9.5 V8" fill="none" stroke="#555" stroke-width="1"/><rect x="1.2" y="2.8" width="6.6" height="7.4" rx="1" fill="none" stroke="#555" stroke-width="1"/><path d="M3 5.2 H6 M3 7.3 H6" stroke="#555" stroke-width=".8"/></svg>
<svg class="abs" style="left:131px;top:499.12px" width="12" height="11" viewBox="0 0 12 11"><path d="M6 0.8 L7.5 4 L11 4.3 L8.3 6.6 L9.2 10.2 L6 8.3 L2.8 10.2 L3.7 6.6 L1 4.3 L4.5 4 Z" fill="none" stroke="#444" stroke-width="0.9" stroke-linejoin="round"/></svg>
<div class="tag" style="left:113px;top:516.12px;width:42px">相关产品</div>
<div class="tag" style="left:159px;top:516.12px;width:51px">扩展关键词</div>
<div class="td" style="left:340px;top:495.62px">629,060</div>
<svg class="abs" style="left:449.5px;top:495.92px" width="9" height="13" viewBox="0 0 9 13"><path d="M4.5 12.5 V1.5 M1 5 L4.5 1.4 L8 5" fill="none" stroke="#ef4a5a" stroke-width="1.5"/></svg>
<div class="td" style="left:461.3px;top:495.62px">66,846</div>
<div class="td" style="left:579px;top:495.62px">7</div>
<div class="td" style="left:688px;top:495.62px">325</div>
<div class="td" style="left:796px;top:495.62px">1,935.57</div>
<div class="td" style="left:890.5px;top:495.62px">18</div>
<div class="td" style="left:1059px;top:495.62px">8</div>
<div class="td" style="left:1215px;top:495.62px">$71.28</div>
<div class="abs" style="left:10px;top:534.29px;width:1306px;height:62.67px;background:#f2f7fc;border-bottom:1px solid #e6eaee"></div>
<div class="abs cb" style="left:25px;top:557.79px"></div>
<div class="abs" style="left:60.5px;top:539.29px;width:44px;height:44px"><svg width="44" height="44" viewBox="0 0 44 44"><rect x="6" y="0" width="32" height="44" rx="7" fill="#fff"/><text x="22" y="10" font-family="Liberation Serif" font-size="6" text-anchor="middle" fill="#111">Kindle</text><path d="M8 21 H18 L28 26 Q34 30 30 31 L20 30 L12 27 Z" fill="none" stroke="#333" stroke-width=".4"/><path d="M12 25 L24 29 L32 26" fill="none" stroke="#444" stroke-width=".4"/><rect x="19" y="38" width="5" height=".8" fill="#555"/></svg></div>
<div class="tt" style="left:113px;top:542.29px">kindle <span style="color:#999">(点燃)</span></div>
<svg class="abs" style="left:115.5px;top:561.79px" width="11" height="11" viewBox="0 0 11 11"><path d="M3 1 H9.5 V8" fill="none" stroke="#555" stroke-width="1"/><rect x="1.2" y="2.8" width="6.6" height="7.4" rx="1" fill="none" stroke="#555" stroke-width="1"/><path d="M3 5.2 H6 M3 7.3 H6" stroke="#555" stroke-width=".8"/></svg>
<svg class="abs" style="left:131px;top:561.79px" width="12" height="11" viewBox="0 0 12 11"><path d="M6 0.8 L7.5 4 L11 4.3 L8.3 6.6 L9.2 10.2 L6 8.3 L2.8 10.2 L3.7 6.6 L1 4.3 L4.5 4 Z" fill="none" stroke="#444" stroke-width="0.9" stroke-linejoin="round"/></svg>
<div class="tag" style="left:113px;top:578.79px;width:42px">相关产品</div>
<div class="tag" style="left:159px;top:578.79px;width:51px">扩展关键词</div>
<div class="td" style="left:340px;top:558.29px">579,878</div>
<svg class="abs" style="left:449.5px;top:558.59px" width="9" height="13" viewBox="0 0 9 13"><path d="M4.5 0.5 V11.5 M1 8 L4.5 11.6 L8 8" fill="none" stroke="#4cbb2a" stroke-width="1.5"/></svg>
<div class="td" style="left:461.3px;top:558.29px">1,339</div>
<div class="td" style="left:579px;top:558.29px">8</div>
<div class="td" style="left:688px;top:558.29px">4</div>
<div class="td" style="left:796px;top:558.29px">144,969.50</div>
<div class="td" style="left:890.5px;top:558.29px">4</div>
<div class="td" style="left:1059px;top:558.29px">3</div>
<div class="td" style="left:1215px;top:558.29px">$32.16</div>
<div class="abs" style="left:10px;top:596.96px;width:1306px;height:62.67px;background:transparent;border-bottom:1px solid #e6eaee"></div>
<div class="abs cb" style="left:25px;top:620.46px"></div>
<div class="abs" style="left:60.5px;top:601.96px;width:44px;height:44px"><svg width="44" height="44" viewBox="0 0 44 44"><defs><linearGradient id="ap" x1="0" x2="1"><stop offset="0" stop-color="#e4e4e4"/><stop offset=".5" stop-color="#fbfbfb"/><stop offset="1" stop-color="#d8d8d8"/></linearGradient></defs><ellipse cx="14" cy="11" rx="9" ry="9" fill="url(#ap)" stroke="#cfcfcf" stroke-width=".6"/><rect x="11.2" y="10" width="6.2" height="30" rx="3" fill="url(#ap)" stroke="#d2d2d2" stroke-width=".6"/><rect x="12.8" y="4" width="3" height="8" rx="1.5" fill="#1a1a1a"/><rect x="12.8" y="38" width="3" height="1.5" fill="#555"/><ellipse cx="31" cy="11.5" rx="9.5" ry="9" fill="url(#ap)" stroke="#cfcfcf" stroke-width=".6"/><ellipse cx="25" cy="13" rx="2.2" ry="4.5" fill="#1a1a1a" transform="rotate(-15 25 13)"/><circle cx="30.5" cy="12" r="1.8" fill="#1a1a1a"/><rect x="27.5" y="17" width="6.2" height="23" rx="3" fill="url(#ap)" stroke="#d2d2d2" stroke-width=".6"/><path d="M28 2.2 Q35 1.8 39 6.5" stroke="#2a2a2a" stroke-width="1.3" fill="none"/></svg></div>
<div class="tt" style="left:113px;top:604.96px">airpods <span style="color:#999">(机舱)</span></div>
<svg class="abs" style="left:115.5px;top:624.46px" width="11" height="11" viewBox="0 0 11 11"><path d="M3 1 H9.5 V8" fill="none" stroke="#555" stroke-width="1"/><rect x="1.2" y="2.8" width="6.6" height="7.4" rx="1" fill="none" stroke="#555" stroke-width="1"/><path d="M3 5.2 H6 M3 7.3 H6" stroke="#555" stroke-width=".8"/></svg>
<svg class="abs" style="left:131px;top:624.46px" width="12" height="11" viewBox="0 0 12 11"><path d="M6 0.8 L7.5 4 L11 4.3 L8.3 6.6 L9.2 10.2 L6 8.3 L2.8 10.2 L3.7 6.6 L1 4.3 L4.5 4 Z" fill="none" stroke="#444" stroke-width="0.9" stroke-linejoin="round"/></svg>
<div class="tag" style="left:113px;top:641.46px;width:42px">相关产品</div>
<div class="tag" style="left:159px;top:641.46px;width:51px">扩展关键词</div>
<div class="td" style="left:340px;top:620.96px">587,643</div>
<svg class="abs" style="left:449.5px;top:621.26px" width="9" height="13" viewBox="0 0 9 13"><path d="M4.5 0.5 V11.5 M1 8 L4.5 11.6 L8 8" fill="none" stroke="#4cbb2a" stroke-width="1.5"/></svg>
<div class="td" style="left:461.3px;top:620.96px">11,088</div>
<div class="td" style="left:579px;top:620.96px">9</div>
<div class="td" style="left:688px;top:620.96px">407</div>
<div class="td" style="left:796px;top:620.96px">1,443.84</div>
<div class="td" style="left:890.5px;top:620.96px">39</div>
<div class="td" style="left:1059px;top:620.96px">0</div>
<div class="td" style="left:1215px;top:620.96px">$135.76</div>
<div class="abs" style="left:10px;top:659.63px;width:1306px;height:62.67px;background:#f2f7fc;border-bottom:1px solid #e6eaee"></div>
<div class="abs cb" style="left:25px;top:683.13px"></div>
<div class="abs" style="left:60.5px;top:664.63px;width:44px;height:44px"><svg width="44" height="44" viewBox="0 0 44 44"><defs><linearGradient id="ow" x1="0" x2="1"><stop offset="0" stop-color="#c8cccb"/><stop offset=".35" stop-color="#eef0ef"/><stop offset="1" stop-color="#b9bdbc"/></linearGradient></defs><circle cx="22" cy="22" r="22" fill="#fff"/><path d="M17.5 9 Q18 5.5 23 4.5 Q26.5 4.5 27 7 V37 Q22 38.5 17.5 37 Z" fill="url(#ow)"/><path d="M17.5 9 Q22 7 27 9.5" stroke="#9aa09e" stroke-width=".8" fill="none"/><ellipse cx="22.3" cy="37.5" rx="5" ry="1" fill="#a8acab"/></svg></div>
<div class="tt" style="left:113px;top:667.63px">owala <span style="color:#999">(奥瓦拉)</span></div>
<svg class="abs" style="left:115.5px;top:687.13px" width="11" height="11" viewBox="0 0 11 11"><path d="M3 1 H9.5 V8" fill="none" stroke="#555" stroke-width="1"/><rect x="1.2" y="2.8" width="6.6" height="7.4" rx="1" fill="none" stroke="#555" stroke-width="1"/><path d="M3 5.2 H6 M3 7.3 H6" stroke="#555" stroke-width=".8"/></svg>
<svg class="abs" style="left:131px;top:687.13px" width="12" height="11" viewBox="0 0 12 11"><path d="M6 0.8 L7.5 4 L11 4.3 L8.3 6.6 L9.2 10.2 L6 8.3 L2.8 10.2 L3.7 6.6 L1 4.3 L4.5 4 Z" fill="none" stroke="#444" stroke-width="0.9" stroke-linejoin="round"/></svg>
<div class="tag" style="left:113px;top:704.13px;width:42px">相关产品</div>
<div class="tag" style="left:159px;top:704.13px;width:51px">扩展关键词</div>
<div class="td" style="left:340px;top:683.63px">608,177</div>
<svg class="abs" style="left:449.5px;top:683.93px" width="9" height="13" viewBox="0 0 9 13"><path d="M4.5 0.5 V11.5 M1 8 L4.5 11.6 L8 8" fill="none" stroke="#4cbb2a" stroke-width="1.5"/></svg>
<div class="td" style="left:461.3px;top:683.63px">25,029</div>
<div class="td" style="left:579px;top:683.63px">10</div>
<div class="td" style="left:688px;top:683.63px">33</div>
<div class="td" style="left:796px;top:683.63px">18,429.61</div>
<div class="td" style="left:890.5px;top:683.63px">33</div>
<div class="td" style="left:1059px;top:683.63px">0</div>
<div class="td" style="left:1215px;top:683.63px">$32.64</div>
<div class="tt" style="left:113px;top:730.3px">hydrogen water tablets</div>
<div class="abs" style="left:60.5px;top:727.3px;width:44px;height:44px;border-radius:22px;background:#fff"></div>
  </div>
  <div class="abs" style="left:1413px;top:744px;width:37px;height:37px;border-radius:50%;background:#fff;border:1px solid #dcdcdc;box-shadow:0 1px 4px rgba(0,0,0,.12);z-index:4">
    <svg class="abs" style="left:10px;top:9px" width="17" height="17" viewBox="0 0 21 21">
      <circle cx="9" cy="10.5" r="7.6" fill="none" stroke="#9fd6ef" stroke-width="1.9" stroke-dasharray="4 1.6" transform="rotate(100 9 10.5)"/>
      <path d="M16.4 9 A7.6 7.6 0 0 1 9 18.1" fill="none" stroke="#1a93d4" stroke-width="1.9" stroke-dasharray="4 1.6"/>
      <path d="M1.6 8.5 A7.6 7.6 0 0 1 14.5 5" fill="none" stroke="#1f3f70" stroke-width="2.1" stroke-dasharray="4 1.6"/>
      <path d="M5.3 9.7 L8.9 13.2 L18.6 3.3" fill="none" stroke="#1f3f70" stroke-width="2"/>
    </svg>
  </div>
  <div id="side">
    <div class="abs" style="left:4px;top:163px;width:106px;height:36px;border-radius:18px;background:#edf5fe"></div>
    <div class="abs" style="left:14px;top:67px;width:87px;height:1px;background:#dcdcdc"></div>
    <!-- 常用 -->
    <svg class="abs" style="left:12px;top:43px" width="11" height="13" viewBox="0 0 11 13"><path d="M0.5 0.5 H10.5 V10 L5.5 12.8 L0.5 10 Z" fill="#1a1a1a"/><path d="M5.5 2.6 L6.3 4.6 L8.4 4.7 L6.8 6 L7.3 8 L5.5 6.9 L3.7 8 L4.2 6 L2.6 4.7 L4.7 4.6 Z" fill="#fff"/></svg>
    <div class="nav" style="top:41.0px">常用</div>
    <!-- 市场看板 -->
    <svg class="abs" style="left:12px;top:94px" width="11" height="11" viewBox="0 0 11 11"><path d="M0.5 1 L3.3 0.5 V10.5 L0.5 10 Z M4.2 0.8 L6.6 1.6 V10.6 L4.2 9.8 Z M7.5 1.5 L10.5 0.8 V10.2 L7.5 10.8 Z" fill="#1a1a1a"/></svg>
    <div class="nav" style="top:91.0px">市场看板</div>
    <!-- 产品看板 -->
    <svg class="abs" style="left:12px;top:134px" width="11" height="12" viewBox="0 0 11 12"><path d="M5.5 0.5 L10.5 3 L5.5 5.5 L0.5 3 Z" fill="#1a1a1a"/><path d="M0.5 3.8 L5 6.1 V11.5 L0.5 9.2 Z" fill="#1a1a1a"/><path d="M10.5 3.8 L6 6.1 V11.5 L10.5 9.2 Z" fill="#1a1a1a"/></svg>
    <div class="nav" style="top:131.5px">产品看板</div>
    <!-- 关键词看板 active -->
    <svg class="abs" style="left:12px;top:175px" width="12" height="12" viewBox="0 0 12 12"><circle cx="6" cy="6" r="5.6" fill="#2f7bf5"/><circle cx="6" cy="6" r="3.6" fill="none" stroke="#fff" stroke-width="1"/><circle cx="6" cy="6" r="1.6" fill="none" stroke="#fff" stroke-width="1"/></svg>
    <div class="nav" style="top:172.0px;color:#2f7bf5">关键词看板</div>
    <!-- 类目报告 -->
    <svg class="abs" style="left:12px;top:216px" width="12" height="12" viewBox="0 0 12 12"><path d="M0.5 0.5 H7 V5.5 H11.5 V11.5 H0.5 Z" fill="#1a1a1a"/><g fill="#fff"><rect x="3" y="7" width="1.3" height="2.5"/><rect x="5.3" y="6" width="1.3" height="3.5"/><rect x="7.6" y="7.5" width="1.3" height="2"/></g><path d="M8.3 0.6 A3.4 3.4 0 0 1 11.5 4 L8.3 4 Z" fill="#1a1a1a"/></svg>
    <div class="nav" style="top:212.5px">类目报告</div>
    <!-- 畅销榜 -->
    <svg class="abs" style="left:12px;top:255px" width="12" height="12" viewBox="0 0 12 12"><path d="M1.2 6 H3 V10 H1.2 Z M4.6 3.5 H6.4 V10 H4.6 Z M8 0.8 H9.8 V10 H8 Z" fill="#1a1a1a"/><rect x="0" y="11" width="12" height="1" fill="#1a1a1a"/></svg>
    <div class="nav" style="top:253.0px">畅销榜</div>
    <!-- API -->
    <div class="nav" style="top:293.0px;left:14px"><b style="font-size:11px;font-weight:bold;letter-spacing:-0.2px">API</b> 数据服务</div>
    <div class="abs" style="left:0;top:1074px;width:117px;height:17px;background:#efefef"></div>
    <svg class="abs" style="left:52px;top:1081px" width="13" height="9" viewBox="0 0 13 9"><path d="M6 1 L2 5 L6 9 M11.5 1 L7.5 5 L11.5 9" fill="none" stroke="#111" stroke-width="1.5"/></svg>
  </div>
</div>
</body></html>
